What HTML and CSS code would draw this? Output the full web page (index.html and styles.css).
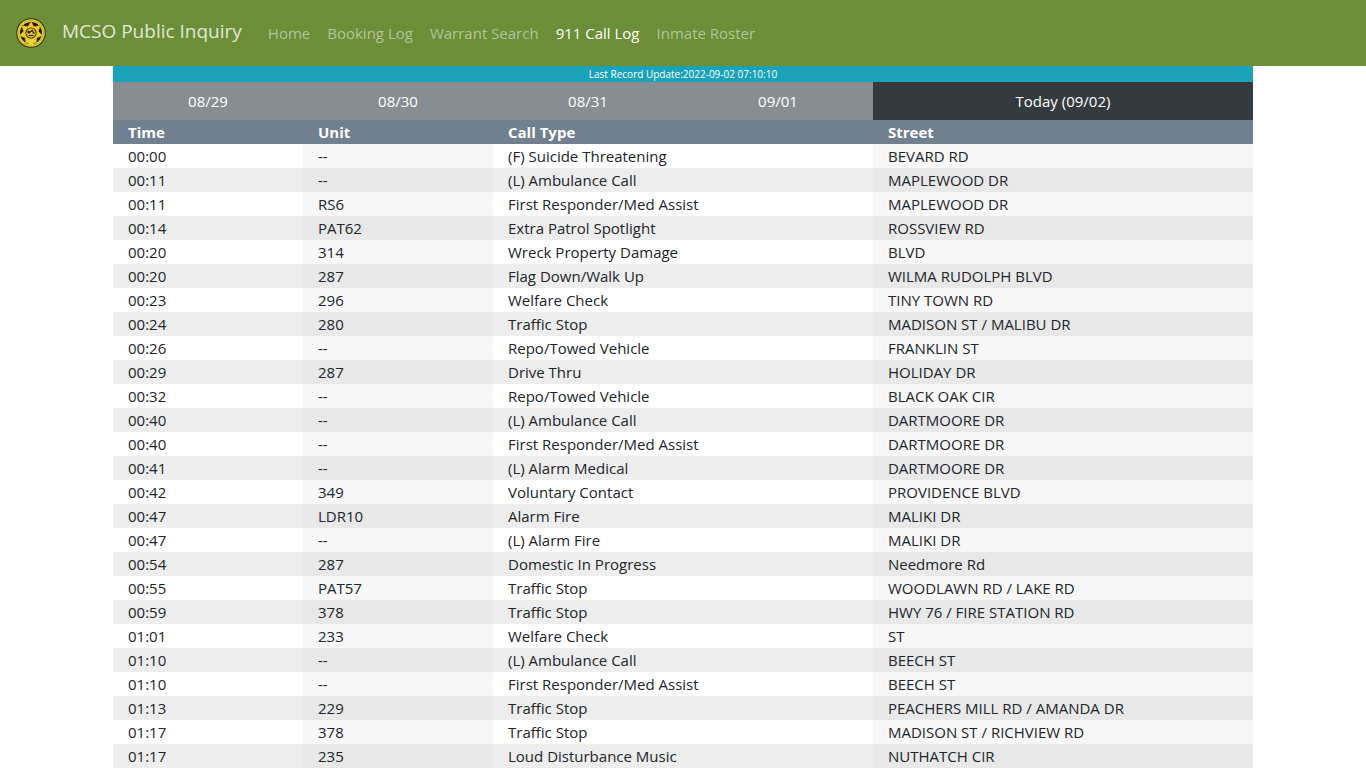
FILE: index.html
```html
<!DOCTYPE html>
<html lang="en">
<head>
<meta charset="utf-8">
<meta name="viewport" content="width=device-width, initial-scale=1">
<title>MCSO Public Inquiry</title>
<link rel="stylesheet" href="styles.css">
</head>
<body>
<header class="navbar">
  <svg class="logo" viewBox="0 0 30 30" aria-hidden="true">
    <circle cx="15" cy="15" r="14.8" fill="#3a3410"/>
    <circle cx="15" cy="15" r="13.7" fill="#ead83c"/>
    <circle cx="15" cy="15" r="12.3" fill="none" stroke="#9c8a1c" stroke-width="1" stroke-dasharray="1 1"/>
    <circle cx="15" cy="15" r="11" fill="#2b1208"/>
    <path d="M15 3.5L18 8.6 24.4 7.5 22.4 13.3 26.7 17.7 21 19.8 20.2 25.8 15 23.5 9.8 25.8 9 19.8 3.3 17.7 7.6 13.3 5.6 7.5 12 8.6Z" fill="#ead024" stroke="#b39618" stroke-width=".5"/>
    <path d="M12 22H18L17.3 27H12.7Z" fill="#ead83c"/>
    <circle cx="15" cy="15" r="5.6" fill="#2a1e08"/>
    <circle cx="15" cy="15" r="4.7" fill="#d8be24"/>
    <path d="M11 14L12.5 12.4 14 13.5 16.5 11.5 17.5 13.5 19 15 17.5 15.6H12.5ZM12.5 17H17.5V18H12.5Z" fill="#332408"/>
    <path d="M14.3 14.8L16.5 13.3 16.5 15.8H13.5Z" fill="#f8e85c"/>
  </svg>
  <a class="brand" href="#">MCSO Public Inquiry</a>
  <nav class="links">
    <a href="#">Home</a>
    <a href="#">Booking Log</a>
    <a href="#">Warrant Search</a>
    <a class="active" href="#" aria-current="page">911 Call Log</a>
    <a href="#">Inmate Roster</a>
  </nav>
</header>
<main class="container">
  <div class="updated">Last Record Update:2022-09-02 07:10:10</div>
  <nav class="days">
    <a href="#">08/29</a>
    <a href="#">08/30</a>
    <a href="#">08/31</a>
    <a href="#">09/01</a>
    <a class="today" href="#">Today (09/02)</a>
  </nav>
  <table class="calls">
    <colgroup><col class="narrow"><col class="narrow"><col class="wide"><col class="wide"></colgroup>
    <thead>
      <tr><th>Time</th><th>Unit</th><th>Call Type</th><th>Street</th></tr>
    </thead>
    <tbody>
      <tr><td>00:00</td><td>--</td><td>(F) Suicide Threatening</td><td>BEVARD RD</td></tr>
      <tr><td>00:11</td><td>--</td><td>(L) Ambulance Call</td><td>MAPLEWOOD DR</td></tr>
      <tr><td>00:11</td><td>RS6</td><td>First Responder/Med Assist</td><td>MAPLEWOOD DR</td></tr>
      <tr><td>00:14</td><td>PAT62</td><td>Extra Patrol Spotlight</td><td>ROSSVIEW RD</td></tr>
      <tr><td>00:20</td><td>314</td><td>Wreck Property Damage</td><td>BLVD</td></tr>
      <tr><td>00:20</td><td>287</td><td>Flag Down/Walk Up</td><td>WILMA RUDOLPH BLVD</td></tr>
      <tr><td>00:23</td><td>296</td><td>Welfare Check</td><td>TINY TOWN RD</td></tr>
      <tr><td>00:24</td><td>280</td><td>Traffic Stop</td><td>MADISON ST / MALIBU DR</td></tr>
      <tr><td>00:26</td><td>--</td><td>Repo/Towed Vehicle</td><td>FRANKLIN ST</td></tr>
      <tr><td>00:29</td><td>287</td><td>Drive Thru</td><td>HOLIDAY DR</td></tr>
      <tr><td>00:32</td><td>--</td><td>Repo/Towed Vehicle</td><td>BLACK OAK CIR</td></tr>
      <tr><td>00:40</td><td>--</td><td>(L) Ambulance Call</td><td>DARTMOORE DR</td></tr>
      <tr><td>00:40</td><td>--</td><td>First Responder/Med Assist</td><td>DARTMOORE DR</td></tr>
      <tr><td>00:41</td><td>--</td><td>(L) Alarm Medical</td><td>DARTMOORE DR</td></tr>
      <tr><td>00:42</td><td>349</td><td>Voluntary Contact</td><td>PROVIDENCE BLVD</td></tr>
      <tr><td>00:47</td><td>LDR10</td><td>Alarm Fire</td><td>MALIKI DR</td></tr>
      <tr><td>00:47</td><td>--</td><td>(L) Alarm Fire</td><td>MALIKI DR</td></tr>
      <tr><td>00:54</td><td>287</td><td>Domestic In Progress</td><td>Needmore Rd</td></tr>
      <tr><td>00:55</td><td>PAT57</td><td>Traffic Stop</td><td>WOODLAWN RD / LAKE RD</td></tr>
      <tr><td>00:59</td><td>378</td><td>Traffic Stop</td><td>HWY 76 / FIRE STATION RD</td></tr>
      <tr><td>01:01</td><td>233</td><td>Welfare Check</td><td>ST</td></tr>
      <tr><td>01:10</td><td>--</td><td>(L) Ambulance Call</td><td>BEECH ST</td></tr>
      <tr><td>01:10</td><td>--</td><td>First Responder/Med Assist</td><td>BEECH ST</td></tr>
      <tr><td>01:13</td><td>229</td><td>Traffic Stop</td><td>PEACHERS MILL RD / AMANDA DR</td></tr>
      <tr><td>01:17</td><td>378</td><td>Traffic Stop</td><td>MADISON ST / RICHVIEW RD</td></tr>
      <tr><td>01:17</td><td>235</td><td>Loud Disturbance Music</td><td>NUTHATCH CIR</td></tr>
    </tbody>
  </table>
</main>
</body>
</html>
```
FILE: styles.css
```css
* {
  box-sizing: border-box;
}

body {
  margin: 0;
  background: #fff;
  color: #212529;
  font-family: "Segoe UI", "Open Sans", "Noto Sans", sans-serif;
  font-size: 15px;
  line-height: 24px;
}

a {
  color: inherit;
  text-decoration: none;
}

.navbar {
  display: flex;
  align-items: center;
  padding: 12px 16px;
  background: #6b8e36;
}

.logo {
  width: 30px;
  height: 30px;
  margin-right: 16px;
}

.brand {
  margin-right: 26px;
  padding-bottom: 4px;
  color: #e1e8d7;
  font-size: 19px;
  line-height: 38px;
  white-space: nowrap;
}

.links {
  display: flex;
  flex-wrap: wrap;
  gap: 17px;
  color: #b3c59a;
}

.links .active {
  color: #fff;
}

.container {
  max-width: 1140px;
  margin: 0 auto;
}

.updated {
  background: #19a2b8;
  color: #fff;
  font-size: 10px;
  line-height: 16px;
  text-align: center;
}

.days {
  display: grid;
  grid-template-columns: repeat(4, 1fr) 2fr;
  background: #868e94;
  color: #fff;
  text-align: center;
}

.days a {
  padding: 7px 12px;
}

.days .today {
  background: #343a40;
}

.calls {
  width: 100%;
  table-layout: fixed;
  border-collapse: collapse;
}

.narrow {
  width: 16.6667%;
}

.wide {
  width: 33.3333%;
}

.calls th,
.calls td {
  padding: 0 15px;
  text-align: left;
}

.calls th {
  background: #708090;
  color: #fff;
  font-weight: 700;
}

.calls td:nth-child(even) {
  background: #f7f7f7;
}

.calls tr:nth-child(even) td {
  background: #ededed;
}

.calls tr:nth-child(even) td:nth-child(even) {
  background: #e8e8e8;
}
```
